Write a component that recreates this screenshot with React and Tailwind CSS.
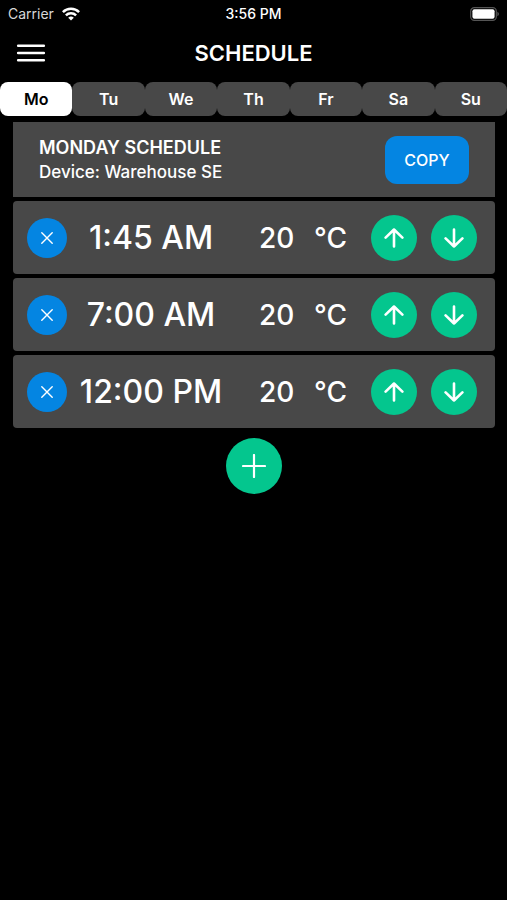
import { useState } from 'react';

const days = ['Mo', 'Tu', 'We', 'Th', 'Fr', 'Sa', 'Su'];

const entries = [
  { time: '1:45 AM', temp: 20 },
  { time: '7:00 AM', temp: 20 },
  { time: '12:00 PM', temp: 20 },
];

function StatusBar() {
  return (
    <div className="grid h-7 grid-cols-3 items-center px-2 text-sm">
      <div className="flex items-center gap-2">
        <span className="text-[#d8d8d8]">Carrier</span>
        <svg className="h-3.5 w-[18px]" viewBox="0 0 18 14" fill="none" stroke="white" strokeWidth="2.5">
          <path d="M0.9 5.2a11.5 11.5 0 0 1 16.2 0" />
          <path d="M3.9 8.3a7.2 7.2 0 0 1 10.2 0" />
          <path d="M9 13.6l-2.8-2.8a4 4 0 0 1 5.6 0z" fill="white" stroke="none" />
        </svg>
      </div>
      <span className="text-center font-medium">3:56 PM</span>
      <svg className="h-3.5 w-[30px] justify-self-end" viewBox="0 0 30 14" fill="none">
        <rect x="1.7" y="0.7" width="25.6" height="12.6" rx="3.6" stroke="#555" strokeWidth="1.2" />
        <rect x="3.4" y="2.2" width="22.2" height="9.6" rx="2" fill="white" />
        <path d="M28.4 4.8c1 .4 1.5 1.3 1.5 2.2s-.5 1.8-1.5 2.2z" fill="#555" />
      </svg>
    </div>
  );
}

function ArrowButton({ label, d }) {
  return (
    <button
      type="button"
      aria-label={label}
      className="flex h-[46px] w-[46px] shrink-0 items-center justify-center rounded-full bg-[#04c68e]"
    >
      <svg
        className="h-5 w-5"
        viewBox="0 0 20 20"
        fill="none"
        stroke="white"
        strokeWidth="2.6"
        strokeLinecap="round"
        strokeLinejoin="round"
      >
        <path d={d} />
      </svg>
    </button>
  );
}

function ScheduleRow({ entry }) {
  return (
    <li className="flex h-[73px] items-center rounded bg-[#484848] pr-[18px] pl-3.5">
      <button
        type="button"
        aria-label={`Remove ${entry.time}`}
        className="flex h-10 w-10 shrink-0 items-center justify-center rounded-full bg-[#0485e2]"
      >
        <svg className="h-3 w-3" viewBox="0 0 12 12" stroke="white" strokeWidth="1.4" strokeLinecap="round">
          <path d="M0.8 0.8l10.4 10.4M11.2 0.8L0.8 11.2" />
        </svg>
      </button>
      <span className="flex-1 text-center text-[32px] font-medium whitespace-nowrap">{entry.time}</span>
      <div className="mx-6 flex w-[88px] justify-between text-[28px] font-medium">
        <span>{entry.temp}</span>
        <span>°C</span>
      </div>
      <div className="flex gap-3.5">
        <ArrowButton label="Increase temperature" d="M10 18.5v-17M1.6 9.6L10 1.5l8.4 8.1" />
        <ArrowButton label="Decrease temperature" d="M10 1.5v17M1.6 10.4l8.4 8.1 8.4-8.1" />
      </div>
    </li>
  );
}

function App() {
  const [day, setDay] = useState('Mo');

  return (
    <div className="min-h-screen bg-black font-['Inter',sans-serif] text-white">
      <StatusBar />

      <header className="grid h-[54px] grid-cols-[1fr_auto_1fr] items-center px-4 pb-1">
        <button type="button" aria-label="Menu" className="w-8">
          <svg className="h-5 w-[30px]" viewBox="0 0 30 20" stroke="white" strokeWidth="2.6" strokeLinecap="round">
            <path d="M2.2 2.7h25.6M2.2 10h25.6M2.2 17.3h25.6" />
          </svg>
        </button>
        <h1 className="text-[22px] font-semibold">SCHEDULE</h1>
      </header>

      <nav className="grid grid-cols-7">
        {days.map((name) => (
          <button
            key={name}
            type="button"
            aria-pressed={day === name}
            onClick={() => setDay(name)}
            className={`h-[34px] rounded-lg text-base font-semibold ${
              day === name ? 'bg-white text-black' : 'bg-[#484848] text-white'
            }`}
          >
            {name}
          </button>
        ))}
      </nav>

      <main className="pt-1.5 pr-3 pl-[13px]">
        <section className="flex h-[75px] items-center justify-between bg-[#484848] px-[26px]">
          <div>
            <h2 className="text-lg leading-6 font-semibold">MONDAY SCHEDULE</h2>
            <p className="text-[17px] leading-6 font-medium">Device: Warehouse SE</p>
          </div>
          <button type="button" className="h-12 w-[84px] rounded-xl bg-[#0485e2] text-base font-medium">
            COPY
          </button>
        </section>

        <ul className="mt-1 flex flex-col gap-1">
          {entries.map((entry) => (
            <ScheduleRow key={entry.time} entry={entry} />
          ))}
        </ul>

        <button
          type="button"
          aria-label="Add time"
          className="mx-auto mt-2.5 flex h-14 w-14 items-center justify-center rounded-full bg-[#04c68e]"
        >
          <svg className="h-6 w-6" viewBox="0 0 24 24" stroke="white" strokeWidth="2.2" strokeLinecap="round">
            <path d="M12 1v22M1 12h22" />
          </svg>
        </button>
      </main>
    </div>
  );
}

export default App;
